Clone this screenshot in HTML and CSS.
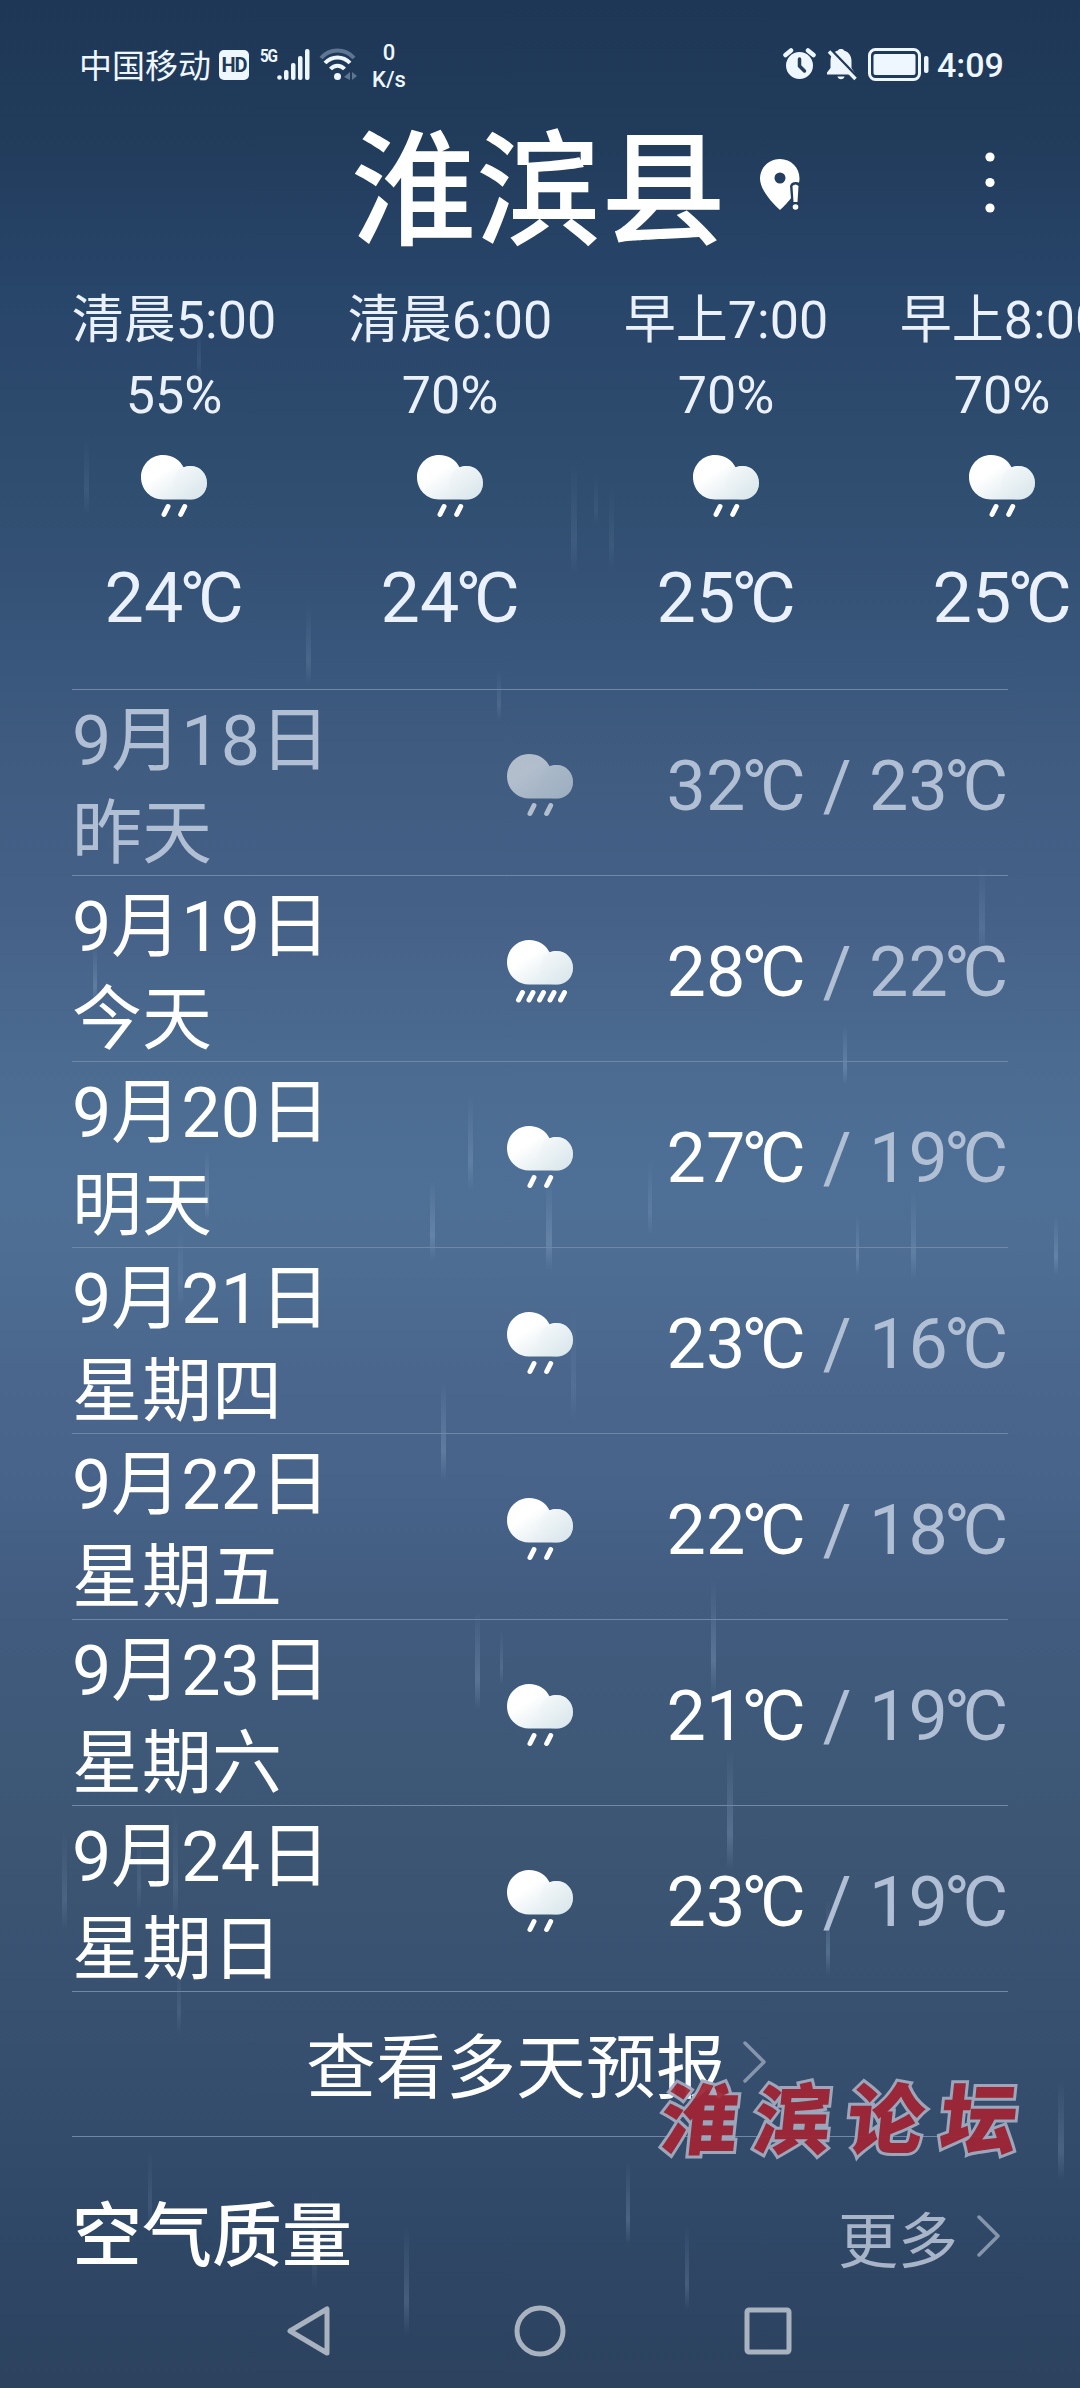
FILE: index.html
```html
<!DOCTYPE html>
<html lang="zh-CN">
<head>
<meta charset="utf-8">
<title>淮滨县天气</title>
<link rel="stylesheet" href="styles.css">
</head>
<body>
<svg class="defs" width="0" height="0">
  <defs>
    <linearGradient id="g1" x1="0" y1="0" x2="1" y2="1"><stop offset="0.35" stop-color="#fff"/><stop offset="1" stop-color="#d3e2e8"/></linearGradient>
    <linearGradient id="g2" x1="0" y1="0" x2="1" y2="1"><stop offset="0" stop-color="#f2f7f8"/><stop offset="1" stop-color="#d8e6eb"/></linearGradient>
    <linearGradient id="streak" x1="0" y1="0" x2="0" y2="1"><stop offset="0" stop-color="#a9c4e4" stop-opacity="0"/><stop offset="0.7" stop-color="#a9c4e4" stop-opacity="0.24"/><stop offset="1" stop-color="#a9c4e4" stop-opacity="0"/></linearGradient>
    <symbol id="cloud" viewBox="0 0 66 45">
      <path fill="url(#g1)" d="M22 0C32 0 39 5 42.5 12.3C45 11.3 47 11 49.500 11C59 11 66 18.500 66 28C66 37.500 59 44.500 50 44.500H22C9.500 44.500 0 34.500 0 22.300S9.500 0 22 0Z"/>
      <path fill="url(#g2)" opacity=".5" d="M42.500 12.300C36 15 32.500 21 32.500 28C32.500 37 39 44.500 49 44.500S66 37.500 66 28S59 11 49.500 11C47 11 45 11.300 42.500 12.300Z"/>
    </symbol>
    <symbol id="rain" viewBox="0 0 66 63">
      <use href="#cloud" width="66" height="45"/>
      <path d="M27 51.500L23 59.500M43.700 51.500L39.700 59.500" stroke="#fff" stroke-width="5" stroke-linecap="round"/>
    </symbol>
    <symbol id="heavy" viewBox="0 0 66 63">
      <use href="#cloud" width="66" height="45"/>
      <path d="M15.500 52.500L11.500 60M26 52.500L22 60M36.500 52.500L32.500 60M47 52.500L43 60M57.500 52.500L53.500 60" stroke="#fff" stroke-width="5" stroke-linecap="round"/>
    </symbol>
    <symbol id="chev" viewBox="0 0 24 42"><path d="M2 2L21 21L2 40" fill="none" stroke="#8595ab" stroke-width="3.500" stroke-linecap="round" stroke-linejoin="round"/></symbol>
  </defs>
</svg>
<div class="screen">
  <svg class="rainfall" width="1080" height="2388" fill="url(#streak)">
    <rect x="197" y="320" width="4" height="60" opacity=".4"/><rect x="84" y="435" width="5" height="80" opacity=".4"/>
    <rect x="571" y="460" width="6" height="115" opacity=".4"/><rect x="594" y="475" width="4" height="50" opacity=".3"/><rect x="609" y="485" width="5" height="85" opacity=".3"/>
    <rect x="306" y="605" width="5" height="80" opacity=".6"/><rect x="497" y="670" width="4" height="50" opacity=".6"/>
    <rect x="979" y="865" width="6" height="90" opacity=".6"/><rect x="93" y="945" width="4" height="60"/>
    <rect x="843" y="1025" width="4" height="60"/><rect x="468" y="1095" width="5" height="95" opacity=".8"/>
    <rect x="205" y="1150" width="4" height="70"/><rect x="430" y="1180" width="5" height="80"/><rect x="546" y="1180" width="6" height="90"/>
    <rect x="648" y="1160" width="4" height="75" opacity=".6"/><rect x="856" y="1215" width="3" height="60"/><rect x="911" y="1190" width="5" height="90" opacity=".8"/>
    <rect x="1054" y="1215" width="4" height="60"/><rect x="178" y="1230" width="5" height="75" opacity=".5"/><rect x="571" y="1310" width="5" height="110" opacity=".4"/>
    <rect x="441" y="1380" width="5" height="100"/><rect x="475" y="1610" width="5" height="100"/><rect x="500" y="1630" width="3" height="55" opacity=".7"/>
    <rect x="711" y="1580" width="5" height="115"/><rect x="727" y="1750" width="6" height="120"/><rect x="62" y="1830" width="5" height="100" opacity=".6"/>
    <rect x="826" y="1900" width="4" height="75"/><rect x="173" y="1810" width="5" height="110" opacity=".5"/><rect x="137" y="1830" width="4" height="80" opacity=".5"/><rect x="177" y="1960" width="4" height="75" opacity=".5"/>
    <rect x="1058" y="2080" width="6" height="100" opacity=".8"/><rect x="626" y="2160" width="4" height="85" opacity=".9"/><rect x="148" y="2150" width="4" height="80" opacity=".5"/>
    <rect x="404" y="2225" width="5" height="110" opacity=".8"/><rect x="685" y="2225" width="4" height="85" opacity=".8"/><rect x="312" y="2190" width="5" height="100" opacity=".4"/>
  </svg>

  <header class="status">
    <span class="carrier">中国移动</span>
    <span class="hd">HD</span>
    <span class="net">5G</span>
    <svg class="signal" width="33" height="33" viewBox="0 0 33 33" fill="#eef6ff"><circle cx="2.500" cy="29.500" r="2.300"/><rect x="7" y="22" width="4.500" height="10" rx="2"/><rect x="14" y="15" width="4.500" height="17" rx="2"/><rect x="21" y="8" width="4.500" height="24" rx="2"/><rect x="28" y="1" width="4.500" height="31" rx="2"/></svg>
    <svg class="wifi" width="38" height="33" viewBox="0 0 38 33" fill="none" stroke-width="4"><path d="M2 10C11 0 26 0 35 10" stroke="#5f7692"/><path d="M6 15C13 7.500 24 7.500 31 15M11.500 21C15.500 16.500 21.500 16.500 25.500 21" stroke="#eef6ff"/><circle cx="18.500" cy="28.500" r="3.500" fill="#eef6ff"/><path d="M31 24V32L25 29ZM33 24V32L38 28Z" fill="#5f7692"/></svg>
    <span class="speed"><span>0</span><span>K/s</span></span>
    <svg class="alarm" width="33" height="33" viewBox="0 0 33 33"><circle cx="16.500" cy="17.500" r="13.500" fill="#eef6ff"/><path d="M2.500 7L8 2.500M25 2.500L30.500 7" stroke="#eef6ff" stroke-width="4.500" stroke-linecap="round"/><path d="M16.500 11V18L21.500 23" fill="none" stroke="#263d59" stroke-width="3.500" stroke-linecap="round"/></svg>
    <svg class="bell" width="31" height="33" viewBox="0 0 31 33"><path fill="#eef6ff" d="M1 26.500V24.500L4.500 20V13C4.500 7 8 3.500 12 2.500C13 .6 17 .6 18 2.500C23 4 25.500 8 25.500 13V20L28.500 24.500V26.500ZM11.500 28.500H18.500C18 32 12 32 11.500 28.500Z"/><path d="M5 2L32 30" stroke="#1f3958" stroke-width="3"/><path d="M3 3.500L29.500 31" stroke="#eef6ff" stroke-width="3.500"/></svg>
    <svg class="battery" width="61" height="33" viewBox="0 0 61 33"><rect x="1.500" y="1.500" width="50" height="30" rx="6" fill="none" stroke="#eef6ff" stroke-width="3"/><rect x="5.500" y="6" width="42" height="21" rx="2" fill="#eef6ff"/><rect x="56" y="8" width="4.500" height="17" rx="2" fill="#eef6ff"/></svg>
    <span class="clock">4:09</span>
  </header>

  <div class="title">
    <h1>淮滨县</h1>
    <svg class="pin" width="42" height="52" viewBox="0 0 42 52"><path fill="#fff" fill-rule="evenodd" d="M20 0C31 0 39.500 8.500 39.500 19.500C39.500 31 27 45 20 51C13 45 0 31 0 19.500C0 8.500 9 0 20 0ZM20 13.500A5.500 5.500 0 1 0 20 24.500A5.500 5.500 0 1 0 20 13.500Z"/><path d="M30 27Q31 23 35.500 23Q41 23 41 27L39 52H32Z" fill="#243f5d"/><path d="M32.500 27Q35.500 24 38.500 27L37.500 43H33.500Z" fill="#fff"/><circle cx="35.500" cy="48" r="2.800" fill="#fff"/></svg>
    <svg class="more-menu" width="10" height="62" viewBox="0 0 10 62" fill="#fff"><circle cx="5" cy="5" r="4.600"/><circle cx="5" cy="30.500" r="4.600"/><circle cx="5" cy="56" r="4.600"/></svg>
  </div>

  <section class="hours">
    <div class="hour"><span>清晨5:00</span><span class="chance">55%</span><svg width="66" height="63"><use href="#rain"/></svg><span class="t">24<i>°</i>C</span></div>
    <div class="hour"><span>清晨6:00</span><span class="chance">70%</span><svg width="66" height="63"><use href="#rain"/></svg><span class="t">24<i>°</i>C</span></div>
    <div class="hour"><span>早上7:00</span><span class="chance">70%</span><svg width="66" height="63"><use href="#rain"/></svg><span class="t">25<i>°</i>C</span></div>
    <div class="hour"><span>早上8:00</span><span class="chance">70%</span><svg width="66" height="63"><use href="#rain"/></svg><span class="t">25<i>°</i>C</span></div>
  </section>

  <section class="days">
    <div class="day past"><div class="date">9月18日<br>昨天</div><svg width="66" height="63"><use href="#rain"/></svg><div class="temps">32<i>°</i>C<span class="low"> / 23<i>°</i>C</span></div></div>
    <div class="day"><div class="date">9月19日<br>今天</div><svg width="66" height="63"><use href="#heavy"/></svg><div class="temps">28<i>°</i>C<span class="low"> / 22<i>°</i>C</span></div></div>
    <div class="day"><div class="date">9月20日<br>明天</div><svg width="66" height="63"><use href="#rain"/></svg><div class="temps">27<i>°</i>C<span class="low"> / 19<i>°</i>C</span></div></div>
    <div class="day"><div class="date">9月21日<br>星期四</div><svg width="66" height="63"><use href="#rain"/></svg><div class="temps">23<i>°</i>C<span class="low"> / 16<i>°</i>C</span></div></div>
    <div class="day"><div class="date">9月22日<br>星期五</div><svg width="66" height="63"><use href="#rain"/></svg><div class="temps">22<i>°</i>C<span class="low"> / 18<i>°</i>C</span></div></div>
    <div class="day"><div class="date">9月23日<br>星期六</div><svg width="66" height="63"><use href="#rain"/></svg><div class="temps">21<i>°</i>C<span class="low"> / 19<i>°</i>C</span></div></div>
    <div class="day"><div class="date">9月24日<br>星期日</div><svg width="66" height="63"><use href="#rain"/></svg><div class="temps">23<i>°</i>C<span class="low"> / 19<i>°</i>C</span></div></div>
  </section>

  <div class="forecast"><span>查看多天预报</span><svg width="24" height="42"><use href="#chev"/></svg></div>

  <div class="air"><h2>空气质量</h2><span class="more">更多</span><svg width="24" height="42"><use href="#chev"/></svg></div>

  <nav class="nav">
    <svg width="46" height="52" viewBox="0 0 46 52"><path d="M41 4V48L4 26Z"/></svg>
    <svg width="52" height="52" viewBox="0 0 52 52"><circle cx="26" cy="26" r="23"/></svg>
    <svg class="recents" width="48" height="48" viewBox="0 0 48 48"><rect x="3" y="3" width="42" height="42" rx="2"/></svg>
  </nav>

  <div class="watermark"><span>淮</span><span>滨</span><span>论</span><span>坛</span></div>
</div>
</body>
</html>
```
FILE: styles.css
```css
* { box-sizing: border-box; }
body { margin: 0; }
i { font-style: normal; margin-left: -4px; letter-spacing: -7.5px; }
svg { display: block; flex: none; }
.defs { position: absolute; }

.screen {
  position: relative;
  display: flex;
  flex-direction: column;
  width: 1080px;
  height: 2388px;
  overflow: hidden;
  color: #fff;
  font-family: Roboto, "Noto Sans CJK SC", sans-serif;
  background: linear-gradient(#1e3756 0, #213b5a 130px, #28456a 290px, #2f4d6e 470px, #38557b 650px, #3f5b80 750px, #466187 920px, #4b6b91 1060px, #4f7096 1190px, #4d6c91 1290px, #4a668d 1370px, #476389 1490px, #425c80 1600px, #3c5674 1820px, #364f6e 2060px, #304968 2200px, #2c425f 2388px);
}
.rainfall { position: absolute; inset: 0; }
.screen > :not(.rainfall):not(.watermark) { position: relative; }

.status { display: flex; align-items: flex-start; height: 108px; padding: 48px 0 0 79px; color: #eef6ff; }
.carrier { padding-top: 2px; font-size: 33px; line-height: 34px; width: 132px; white-space: nowrap; }
.hd { width: 30px; height: 30px; margin: 2px 0 0 8px; border-radius: 5px; background: #eef6ff; color: #203a58; font-size: 20px; font-weight: 700; line-height: 31px; text-align: center; letter-spacing: -1px; }
.net { margin: -1px 0 0 11px; width: 17px; font: 700 18px/18px "Roboto"; letter-spacing: -1.5px; transform: scaleX(.85); transform-origin: left; }
.wifi { margin-left: 9px; }
.speed { display: flex; flex-direction: column; align-items: center; margin: -9px 0 0 9px; width: 46px; font-size: 22px; line-height: 27px; font-weight: 500; }
.alarm { margin-left: 371px; }
.bell { margin-left: 10px; }
.battery { margin-left: 11px; }
.clock { margin-left: 8px; font-size: 34px; line-height: 34px; font-weight: 500; }

.title { display: flex; align-items: flex-start; height: 168px; padding-left: 351px; }
h1 { margin: 0; padding-top: 5px; font-size: 125px; line-height: 160px; font-weight: 500; width: 376px; white-space: nowrap; }
.pin { margin: 51px 0 0 33px; }
.more-menu { margin: 44px 0 0 183px; }

.hours { display: flex; height: 413px; padding: 9px 0 0 36px; color: #ebf1fb; }
.hour { flex: none; width: 276px; display: flex; flex-direction: column; align-items: center; font-size: 52px; line-height: 72px; white-space: nowrap; }
.chance { margin-top: 3px; line-height: 72px; }
.hour svg { margin-top: 23px; }
.t { margin-top: 38px; font-size: 70px; line-height: 84px; }

.days { margin: 0 72px; height: 1302px; }
.day { display: grid; grid-template-columns: 435px 66px 1fr; align-items: center; height: 186px; padding-top: 5px; border-top: 1px solid #7088a7; }
.date { height: 181px; font-size: 70px; line-height: 93px; }
.temps { font-size: 70px; line-height: 84px; text-align: right; white-space: pre; }
.low { color: #b0bfd4; }
.past { color: #b0bfd4; }
.past svg { opacity: .6; }

.forecast { display: flex; align-items: center; margin: 0 72px; height: 146px; padding-left: 234px; gap: 17px; border: solid #7088a7; border-width: 1px 0; font-size: 70px; line-height: 93px; }
.forecast span { width: 420px; padding-top: 11px; white-space: nowrap; }
.forecast svg { margin-top: -4px; }

.air { display: flex; align-items: center; margin: 0 72px; height: 150px; padding-top: 46px; }
h2 { margin: 0; padding-top: 4px; font-size: 70px; line-height: 93px; font-weight: 500; width: 280px; white-space: nowrap; }
.more { margin-left: 486px; width: 120px; padding-top: 15px; font-size: 60px; line-height: 80px; color: #a8b5c8; }
.air svg { margin-left: 19px; margin-top: 2px; }

.nav { display: flex; align-items: center; height: 87px; padding-left: 286px; gap: 182px; fill: none; stroke: #a9b2bf; stroke-width: 5; stroke-linejoin: round; }
.recents { margin-left: -4px; }

.watermark { position: absolute; left: 662px; top: 2063px; display: flex; gap: 16px; font: 900 77px/104px "Noto Sans CJK SC", sans-serif; color: #a02636; -webkit-text-stroke: 6px #a1abc0; paint-order: stroke fill; opacity: .95; }
.watermark span { transform: skewX(-6deg); }
```
